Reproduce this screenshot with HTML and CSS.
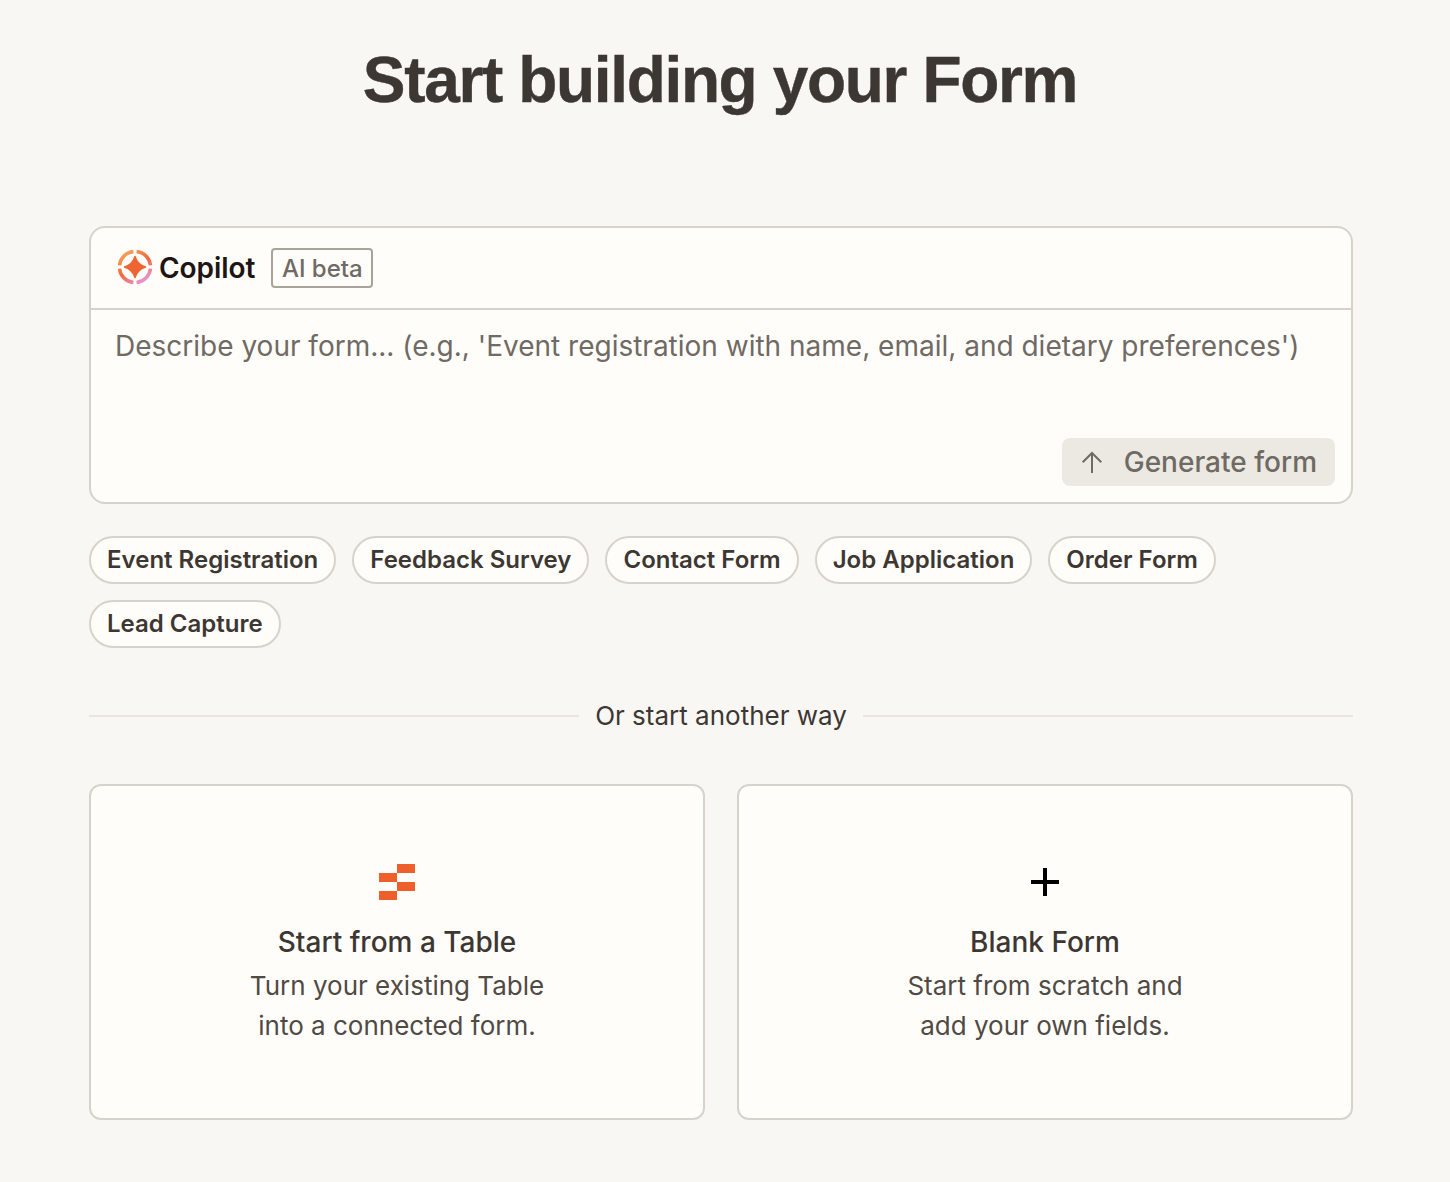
FILE: index.html
```html
<!DOCTYPE html>
<html lang="en">
<head>
<meta charset="utf-8">
<title>Start building your Form</title>
<link rel="stylesheet" href="styles.css">
</head>
<body>
<main class="page">
  <h1 class="title">Start building your Form</h1>
  <section class="copilot">
    <header class="copilot-head">
      <svg class="copilot-logo" width="36" height="36" viewBox="0 0 36 36" fill="none">
        <defs>
          <linearGradient id="g" x1="8" y1="2" x2="28" y2="34" gradientUnits="userSpaceOnUse">
            <stop offset="0" stop-color="#f6a45e"/>
            <stop offset="0.5" stop-color="#f0673b"/>
            <stop offset="1" stop-color="#e89be0"/>
          </linearGradient>
        </defs>
        <g stroke="url(#g)" stroke-width="3.500">
          <path d="M2.500 16.400A15.500 15.500 0 0 1 16.400 2.500"/>
          <path d="M19.600 2.500A15.500 15.500 0 0 1 33.500 16.400"/>
          <path d="M2.500 19.600A15.500 15.500 0 0 0 16.400 33.500"/>
          <path d="M19.600 33.500A15.500 15.500 0 0 0 33.500 19.600"/>
        </g>
        <path d="M18 7.500C19.500 12.500 23.500 16.500 28.500 18C23.500 19.500 19.500 23.500 18 28.500C16.500 23.500 12.500 19.500 7.500 18C12.500 16.500 16.500 12.500 18 7.500Z" fill="#ef6433" stroke="#ef6433" stroke-width="1.500" stroke-linejoin="round"/>
      </svg>
      <span class="copilot-name">Copilot</span>
      <span class="badge">AI beta</span>
    </header>
    <div class="copilot-body">
      <p class="placeholder">Describe your form... (e.g., 'Event registration with name, email, and dietary preferences')</p>
      <div class="actions">
        <button class="generate" type="button">
          <svg width="24" height="24" viewBox="0 0 24 24" fill="none" stroke="#6f6a64" stroke-width="2">
            <path d="M12 23V3.500M2.700 12.300L12 3l9.300 9.300"/>
          </svg>
          <span>Generate form</span>
        </button>
      </div>
    </div>
  </section>
  <div class="chips">
    <span class="chip">Event Registration</span>
    <span class="chip">Feedback Survey</span>
    <span class="chip">Contact Form</span>
    <span class="chip">Job Application</span>
    <span class="chip">Order Form</span>
    <span class="chip">Lead Capture</span>
  </div>
  <div class="divider"><span class="divider-label">Or start another way</span></div>
  <div class="options">
    <article class="option">
      <svg class="option-icon" width="36" height="36" viewBox="0 0 36 36" fill="#ee5f2c">
        <rect x="18" y="0" width="18" height="9"/>
        <rect x="0" y="9" width="18" height="9"/>
        <rect x="18" y="18" width="18" height="9"/>
        <rect x="0" y="27" width="18" height="9"/>
      </svg>
      <h2 class="option-title">Start from a Table</h2>
      <p class="option-text">Turn your existing Table<br>into a connected form.</p>
    </article>
    <article class="option">
      <svg class="option-icon" width="36" height="36" viewBox="0 0 36 36" fill="none" stroke="#000" stroke-width="4">
        <path d="M18 4V32M4 18H32"/>
      </svg>
      <h2 class="option-title">Blank Form</h2>
      <p class="option-text">Start from scratch and<br>add your own fields.</p>
    </article>
  </div>
</main>
</body>
</html>
```
FILE: styles.css
```css
* { box-sizing: border-box; }
html, body { margin: 0; height: 100%; }
body {
  background: #f8f7f4;
  color: #3d3733;
  font-family: Inter, "Noto Sans", sans-serif;
}
.page {
  width: 1264px;
  margin-left: 89px;
  padding-top: 40px;
}
.title {
  margin: 0 0 106px;
  height: 80px;
  font-family: "Liberation Sans", Arial, sans-serif;
  font-size: 64px;
  line-height: 80px;
  font-weight: 700;
  letter-spacing: -1.35px;
  text-align: center;
  color: #3d3733;
  padding-right: 2px;
  -webkit-text-stroke: 0.4px #3d3733;
}
.copilot {
  height: 278px;
  background: #fffdf9;
  border: 2px solid #d7d3cb;
  border-radius: 16px;
  display: flex;
  flex-direction: column;
}
.copilot-head {
  height: 82px;
  flex: none;
  display: flex;
  align-items: center;
  padding: 0 0 2px 26px;
  border-bottom: 2px solid #d7d3cb;
}
.copilot-logo { display: block; flex: none; }
.copilot-name {
  margin-left: 6px;
  margin-top: 2px;
  font-size: 28px;
  font-weight: 600;
  letter-spacing: -0.05px;
  color: #201515;
}
.badge {
  margin-left: 16px;
  margin-top: 2px;
  height: 40px;
  padding: 0 8.5px;
  display: flex;
  align-items: center;
  border: 2px solid #a8a499;
  border-radius: 4px;
  font-size: 24px;
  font-weight: 500;
  color: #6f6a64;
}
.copilot-body {
  flex: 1;
  display: flex;
  flex-direction: column;
  justify-content: space-between;
  padding: 16px 16px 16px 24px;
}
.placeholder {
  margin: 0;
  font-size: 28px;
  line-height: 40px;
  color: #6f6a64;
}
.actions { display: flex; justify-content: flex-end; }
.generate {
  height: 48px;
  padding: 0 18px;
  display: flex;
  align-items: center;
  gap: 20px;
  border: 0;
  border-radius: 8px;
  background: #ebe9e2;
  color: #6f6a64;
  font: 500 28px Inter, "Noto Sans", sans-serif;
}
.chips {
  margin-top: 32px;
  display: flex;
  flex-wrap: wrap;
  gap: 16px;
  width: 1200px;
}
.chip {
  height: 48px;
  padding: 0 16px 2px;
  display: flex;
  align-items: center;
  background: #fffdf9;
  border: 2px solid #d7d3cb;
  border-radius: 24px;
  font-size: 24px;
  font-weight: 600;
  letter-spacing: 0.005px;
  color: #3d3733;
}
.divider {
  margin-top: 48px;
  height: 40px;
  display: flex;
  align-items: center;
  gap: 16px;
  font-size: 26px;
  color: #3d3733;
}
.divider-label { padding-bottom: 2px; }
.divider::before, .divider::after {
  content: "";
  flex: 1;
  height: 2px;
  background: #e9e6df;
}
.options {
  margin-top: 48px;
  display: grid;
  grid-template-columns: 1fr 1fr;
  gap: 32px;
}
.option {
  height: 336px;
  padding-top: 78px;
  display: flex;
  flex-direction: column;
  align-items: center;
  text-align: center;
  background: #fffdf9;
  border: 2px solid #d7d3cb;
  border-radius: 12px;
}
.option-icon { display: block; flex: none; }
.option-title {
  margin: 22px 0 4px;
  font-size: 28px;
  line-height: 40px;
  font-weight: 500;
  color: #3d3733;
}
.option-text {
  margin: 0;
  font-size: 26px;
  line-height: 40px;
  color: #504a45;
}
```
